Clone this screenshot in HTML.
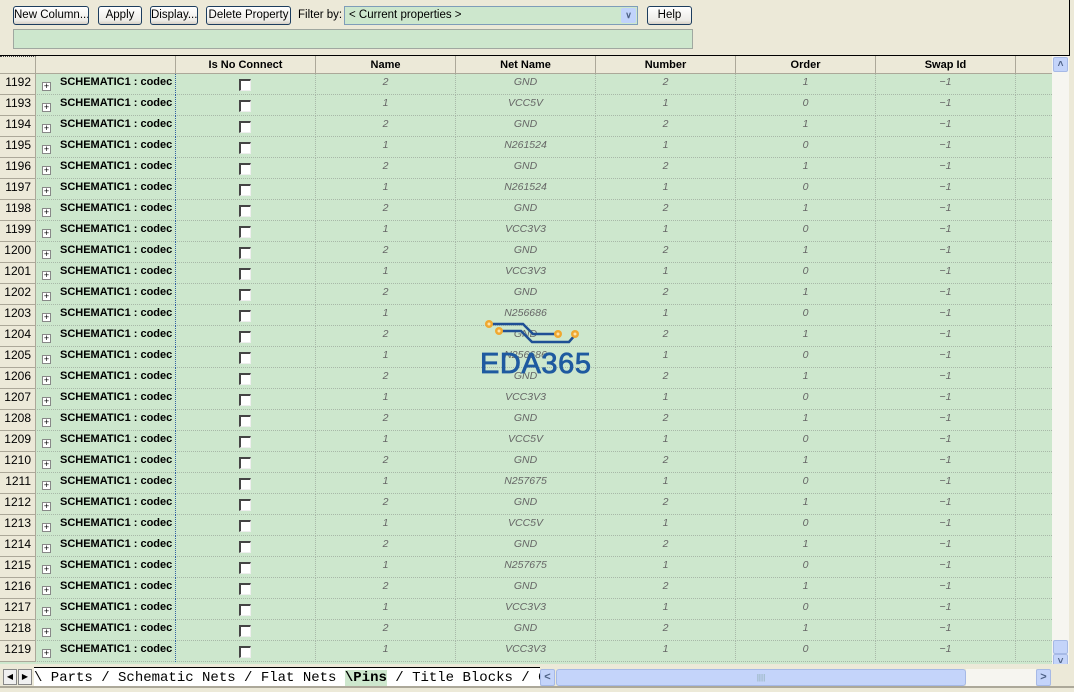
<!DOCTYPE html>
<html><head><meta charset="utf-8"><style>
*{margin:0;padding:0;box-sizing:border-box}
body{width:1074px;height:692px;overflow:hidden;background:#ece9d8;font-family:Tahoma,"Liberation Sans",sans-serif;font-size:11px;position:relative}
.a{position:absolute}
.btn{position:absolute;top:6px;height:19px;border:1px solid #1c3d5e;border-radius:3px;background:linear-gradient(#fff,#ecebe6 80%,#d6d0c5);font-size:11.5px;text-align:center;line-height:17px;color:#000;white-space:nowrap;overflow:hidden}
#grid{position:absolute;left:0;top:56px;width:1052px;height:608px;background:#cde7cd;overflow:hidden}
.hd{position:absolute;top:0;height:18px;background:#ece9d8;border-right:1px solid #aca899;border-bottom:1px solid #aca899;font-weight:bold;text-align:center;line-height:19px;font-family:"Liberation Sans",sans-serif;font-size:11px}
.row{position:absolute;left:0;width:1052px;height:21px;border-bottom:1px dotted #a8b8a8}
.row div{position:absolute;top:0;height:21px;line-height:17px}
.rn{left:0;width:36px;background:#ece9d8;border-right:1px solid #aca899;border-bottom:1px solid #aca899;text-align:right;padding-right:4px;font-family:"Liberation Sans",sans-serif;font-size:12px}
.ex{left:36px;width:140px;border-right:1px dotted #3060a0}
.ex i{position:absolute;left:6px;top:8px;width:9px;height:9px;border:1px solid #888;background:#fff;font-style:normal;font-size:9px;line-height:7px;text-align:center;color:#000}
.ex b{position:absolute;left:24px;top:0;font-family:"Liberation Sans",sans-serif;font-size:11px}
.ck{left:176px;width:140px;border-right:1px dotted #a8b8a8}
.ck span{position:absolute;left:63px;top:5px;width:12px;height:12px;border-left:2px solid #444;border-top:2px solid #444;border-right:1px solid #eee;border-bottom:1px solid #eee;background:#fff}
.c{width:140px;text-align:center;font-style:italic;color:#666;border-right:1px dotted #a8b8a8;font-family:"Liberation Sans",sans-serif;font-size:10.5px}
</style></head><body>
<div class="btn" style="left:13px;width:76px">New Column...</div>
<div class="btn" style="left:98px;width:44px">Apply</div>
<div class="btn" style="left:150px;width:48px">Display...</div>
<div class="btn" style="left:206px;width:85px">Delete Property</div>
<div class="a" style="left:298px;top:9px;font-size:11.5px">Filter by:</div>
<div class="a" style="left:344px;top:6px;width:294px;height:19px;background:#cde7cd;border:1px solid #7f9db9;padding-left:4px;line-height:17px;font-size:11.5px">&lt; Current properties &gt;<div class="a" style="right:1px;top:1px;width:15px;height:15px;background:#c1d3fb;border-radius:2px;color:#4d6185;font-size:9px;text-align:center;line-height:15px;font-weight:bold">&#8744;</div></div>
<div class="btn" style="left:647px;width:45px">Help</div>
<div class="a" style="left:13px;top:29px;width:680px;height:20px;background:#cde7cd;border:1px solid #a0a8a0"></div>
<div class="a" style="left:0;top:0;width:1070px;height:56px;border-right:1px solid #000;border-bottom:1px solid #000"></div>

<div id="grid">
<div class="hd" style="left:0;width:36px;border-top:1px dotted #444"></div>
<div class="hd" style="left:36px;width:140px"></div>
<div class="hd" style="left:176px;width:140px">Is No Connect</div>
<div class="hd" style="left:316px;width:140px">Name</div>
<div class="hd" style="left:456px;width:140px">Net Name</div>
<div class="hd" style="left:596px;width:140px">Number</div>
<div class="hd" style="left:736px;width:140px">Order</div>
<div class="hd" style="left:876px;width:140px">Swap Id</div>
<div class="hd" style="left:1016px;width:36px;border-right:none"></div>

<div class="row" style="top:18px"><div class="rn">1192</div><div class="ex"><i>+</i><b>SCHEMATIC1 : codec</b></div><div class="ck"><span></span></div><div class="c" style="left:316px">2</div><div class="c" style="left:456px">GND</div><div class="c" style="left:596px">2</div><div class="c" style="left:736px">1</div><div class="c" style="left:876px">−1</div></div>
<div class="row" style="top:39px"><div class="rn">1193</div><div class="ex"><i>+</i><b>SCHEMATIC1 : codec</b></div><div class="ck"><span></span></div><div class="c" style="left:316px">1</div><div class="c" style="left:456px">VCC5V</div><div class="c" style="left:596px">1</div><div class="c" style="left:736px">0</div><div class="c" style="left:876px">−1</div></div>
<div class="row" style="top:60px"><div class="rn">1194</div><div class="ex"><i>+</i><b>SCHEMATIC1 : codec</b></div><div class="ck"><span></span></div><div class="c" style="left:316px">2</div><div class="c" style="left:456px">GND</div><div class="c" style="left:596px">2</div><div class="c" style="left:736px">1</div><div class="c" style="left:876px">−1</div></div>
<div class="row" style="top:81px"><div class="rn">1195</div><div class="ex"><i>+</i><b>SCHEMATIC1 : codec</b></div><div class="ck"><span></span></div><div class="c" style="left:316px">1</div><div class="c" style="left:456px">N261524</div><div class="c" style="left:596px">1</div><div class="c" style="left:736px">0</div><div class="c" style="left:876px">−1</div></div>
<div class="row" style="top:102px"><div class="rn">1196</div><div class="ex"><i>+</i><b>SCHEMATIC1 : codec</b></div><div class="ck"><span></span></div><div class="c" style="left:316px">2</div><div class="c" style="left:456px">GND</div><div class="c" style="left:596px">2</div><div class="c" style="left:736px">1</div><div class="c" style="left:876px">−1</div></div>
<div class="row" style="top:123px"><div class="rn">1197</div><div class="ex"><i>+</i><b>SCHEMATIC1 : codec</b></div><div class="ck"><span></span></div><div class="c" style="left:316px">1</div><div class="c" style="left:456px">N261524</div><div class="c" style="left:596px">1</div><div class="c" style="left:736px">0</div><div class="c" style="left:876px">−1</div></div>
<div class="row" style="top:144px"><div class="rn">1198</div><div class="ex"><i>+</i><b>SCHEMATIC1 : codec</b></div><div class="ck"><span></span></div><div class="c" style="left:316px">2</div><div class="c" style="left:456px">GND</div><div class="c" style="left:596px">2</div><div class="c" style="left:736px">1</div><div class="c" style="left:876px">−1</div></div>
<div class="row" style="top:165px"><div class="rn">1199</div><div class="ex"><i>+</i><b>SCHEMATIC1 : codec</b></div><div class="ck"><span></span></div><div class="c" style="left:316px">1</div><div class="c" style="left:456px">VCC3V3</div><div class="c" style="left:596px">1</div><div class="c" style="left:736px">0</div><div class="c" style="left:876px">−1</div></div>
<div class="row" style="top:186px"><div class="rn">1200</div><div class="ex"><i>+</i><b>SCHEMATIC1 : codec</b></div><div class="ck"><span></span></div><div class="c" style="left:316px">2</div><div class="c" style="left:456px">GND</div><div class="c" style="left:596px">2</div><div class="c" style="left:736px">1</div><div class="c" style="left:876px">−1</div></div>
<div class="row" style="top:207px"><div class="rn">1201</div><div class="ex"><i>+</i><b>SCHEMATIC1 : codec</b></div><div class="ck"><span></span></div><div class="c" style="left:316px">1</div><div class="c" style="left:456px">VCC3V3</div><div class="c" style="left:596px">1</div><div class="c" style="left:736px">0</div><div class="c" style="left:876px">−1</div></div>
<div class="row" style="top:228px"><div class="rn">1202</div><div class="ex"><i>+</i><b>SCHEMATIC1 : codec</b></div><div class="ck"><span></span></div><div class="c" style="left:316px">2</div><div class="c" style="left:456px">GND</div><div class="c" style="left:596px">2</div><div class="c" style="left:736px">1</div><div class="c" style="left:876px">−1</div></div>
<div class="row" style="top:249px"><div class="rn">1203</div><div class="ex"><i>+</i><b>SCHEMATIC1 : codec</b></div><div class="ck"><span></span></div><div class="c" style="left:316px">1</div><div class="c" style="left:456px">N256686</div><div class="c" style="left:596px">1</div><div class="c" style="left:736px">0</div><div class="c" style="left:876px">−1</div></div>
<div class="row" style="top:270px"><div class="rn">1204</div><div class="ex"><i>+</i><b>SCHEMATIC1 : codec</b></div><div class="ck"><span></span></div><div class="c" style="left:316px">2</div><div class="c" style="left:456px">GND</div><div class="c" style="left:596px">2</div><div class="c" style="left:736px">1</div><div class="c" style="left:876px">−1</div></div>
<div class="row" style="top:291px"><div class="rn">1205</div><div class="ex"><i>+</i><b>SCHEMATIC1 : codec</b></div><div class="ck"><span></span></div><div class="c" style="left:316px">1</div><div class="c" style="left:456px">N256686</div><div class="c" style="left:596px">1</div><div class="c" style="left:736px">0</div><div class="c" style="left:876px">−1</div></div>
<div class="row" style="top:312px"><div class="rn">1206</div><div class="ex"><i>+</i><b>SCHEMATIC1 : codec</b></div><div class="ck"><span></span></div><div class="c" style="left:316px">2</div><div class="c" style="left:456px">GND</div><div class="c" style="left:596px">2</div><div class="c" style="left:736px">1</div><div class="c" style="left:876px">−1</div></div>
<div class="row" style="top:333px"><div class="rn">1207</div><div class="ex"><i>+</i><b>SCHEMATIC1 : codec</b></div><div class="ck"><span></span></div><div class="c" style="left:316px">1</div><div class="c" style="left:456px">VCC3V3</div><div class="c" style="left:596px">1</div><div class="c" style="left:736px">0</div><div class="c" style="left:876px">−1</div></div>
<div class="row" style="top:354px"><div class="rn">1208</div><div class="ex"><i>+</i><b>SCHEMATIC1 : codec</b></div><div class="ck"><span></span></div><div class="c" style="left:316px">2</div><div class="c" style="left:456px">GND</div><div class="c" style="left:596px">2</div><div class="c" style="left:736px">1</div><div class="c" style="left:876px">−1</div></div>
<div class="row" style="top:375px"><div class="rn">1209</div><div class="ex"><i>+</i><b>SCHEMATIC1 : codec</b></div><div class="ck"><span></span></div><div class="c" style="left:316px">1</div><div class="c" style="left:456px">VCC5V</div><div class="c" style="left:596px">1</div><div class="c" style="left:736px">0</div><div class="c" style="left:876px">−1</div></div>
<div class="row" style="top:396px"><div class="rn">1210</div><div class="ex"><i>+</i><b>SCHEMATIC1 : codec</b></div><div class="ck"><span></span></div><div class="c" style="left:316px">2</div><div class="c" style="left:456px">GND</div><div class="c" style="left:596px">2</div><div class="c" style="left:736px">1</div><div class="c" style="left:876px">−1</div></div>
<div class="row" style="top:417px"><div class="rn">1211</div><div class="ex"><i>+</i><b>SCHEMATIC1 : codec</b></div><div class="ck"><span></span></div><div class="c" style="left:316px">1</div><div class="c" style="left:456px">N257675</div><div class="c" style="left:596px">1</div><div class="c" style="left:736px">0</div><div class="c" style="left:876px">−1</div></div>
<div class="row" style="top:438px"><div class="rn">1212</div><div class="ex"><i>+</i><b>SCHEMATIC1 : codec</b></div><div class="ck"><span></span></div><div class="c" style="left:316px">2</div><div class="c" style="left:456px">GND</div><div class="c" style="left:596px">2</div><div class="c" style="left:736px">1</div><div class="c" style="left:876px">−1</div></div>
<div class="row" style="top:459px"><div class="rn">1213</div><div class="ex"><i>+</i><b>SCHEMATIC1 : codec</b></div><div class="ck"><span></span></div><div class="c" style="left:316px">1</div><div class="c" style="left:456px">VCC5V</div><div class="c" style="left:596px">1</div><div class="c" style="left:736px">0</div><div class="c" style="left:876px">−1</div></div>
<div class="row" style="top:480px"><div class="rn">1214</div><div class="ex"><i>+</i><b>SCHEMATIC1 : codec</b></div><div class="ck"><span></span></div><div class="c" style="left:316px">2</div><div class="c" style="left:456px">GND</div><div class="c" style="left:596px">2</div><div class="c" style="left:736px">1</div><div class="c" style="left:876px">−1</div></div>
<div class="row" style="top:501px"><div class="rn">1215</div><div class="ex"><i>+</i><b>SCHEMATIC1 : codec</b></div><div class="ck"><span></span></div><div class="c" style="left:316px">1</div><div class="c" style="left:456px">N257675</div><div class="c" style="left:596px">1</div><div class="c" style="left:736px">0</div><div class="c" style="left:876px">−1</div></div>
<div class="row" style="top:522px"><div class="rn">1216</div><div class="ex"><i>+</i><b>SCHEMATIC1 : codec</b></div><div class="ck"><span></span></div><div class="c" style="left:316px">2</div><div class="c" style="left:456px">GND</div><div class="c" style="left:596px">2</div><div class="c" style="left:736px">1</div><div class="c" style="left:876px">−1</div></div>
<div class="row" style="top:543px"><div class="rn">1217</div><div class="ex"><i>+</i><b>SCHEMATIC1 : codec</b></div><div class="ck"><span></span></div><div class="c" style="left:316px">1</div><div class="c" style="left:456px">VCC3V3</div><div class="c" style="left:596px">1</div><div class="c" style="left:736px">0</div><div class="c" style="left:876px">−1</div></div>
<div class="row" style="top:564px"><div class="rn">1218</div><div class="ex"><i>+</i><b>SCHEMATIC1 : codec</b></div><div class="ck"><span></span></div><div class="c" style="left:316px">2</div><div class="c" style="left:456px">GND</div><div class="c" style="left:596px">2</div><div class="c" style="left:736px">1</div><div class="c" style="left:876px">−1</div></div>
<div class="row" style="top:585px"><div class="rn">1219</div><div class="ex"><i>+</i><b>SCHEMATIC1 : codec</b></div><div class="ck"><span></span></div><div class="c" style="left:316px">1</div><div class="c" style="left:456px">VCC3V3</div><div class="c" style="left:596px">1</div><div class="c" style="left:736px">0</div><div class="c" style="left:876px">−1</div></div>
</div>

<svg class="a" style="left:478px;top:316px" width="116" height="62" viewBox="0 0 116 62">
<path d="M11 8 H45 L55 18 H80" stroke="#1f4f95" stroke-width="2.5" fill="none"/>
<path d="M21 15 H43 L54 26 H91 L97 19" stroke="#1f4f95" stroke-width="2.5" fill="none"/>
<circle cx="11" cy="8" r="4" fill="#f0a830"/><circle cx="21" cy="15" r="4" fill="#f0a830"/><circle cx="80" cy="18" r="4" fill="#f0a830"/><circle cx="97" cy="18" r="4" fill="#f0a830"/>
<circle cx="11" cy="8" r="1.5" fill="#fde2a8"/><circle cx="21" cy="15" r="1.5" fill="#fde2a8"/><circle cx="80" cy="18" r="1.5" fill="#fde2a8"/><circle cx="97" cy="18" r="1.5" fill="#fde2a8"/>
<text x="2" y="57" font-family="Liberation Sans,sans-serif" font-size="29" fill="#1f5aa0" stroke="#1f5aa0" stroke-width="0.8" textLength="111">EDA365</text>
</svg>

<div class="a" style="left:1052px;top:56px;width:17px;height:613px;background:#f6f5f0"></div>
<div class="a" style="left:1053px;top:57px;width:15px;height:15px;background:#c4d4fa;border:1px solid #a6b9e6;border-radius:2px;color:#4d6185;font-size:10px;text-align:center;line-height:14px;font-weight:bold">&#708;</div>
<div class="a" style="left:1053px;top:640px;width:15px;height:14px;background:#c4d4fa;border:1px solid #a6b9e6;border-radius:2px"></div>
<div class="a" style="left:1053px;top:654px;width:15px;height:15px;background:#c4d4fa;border:1px solid #a6b9e6;border-radius:2px;color:#4d6185;font-size:10px;text-align:center;line-height:14px;font-weight:bold">&#709;</div>

<div class="a" style="left:0;top:664px;width:1074px;height:28px;background:#ece9d8"></div>
<div class="a" style="left:0;top:686px;width:1074px;height:2px;background:#aca899"></div>
<div class="a" style="left:3px;top:669px;width:14px;height:16px;border:1px solid #888;background:#f0f0f0;font-size:8px;line-height:14px;text-align:center">&#9664;</div>
<div class="a" style="left:18px;top:669px;width:14px;height:16px;border:1px solid #888;background:#f0f0f0;font-size:8px;line-height:14px;text-align:center">&#9654;</div>
<div class="a" style="left:34px;top:667px;width:506px;height:19px;background:#fff;border-top:1px solid #000;overflow:hidden;font-family:'Liberation Mono',monospace;font-size:14px;line-height:20px;white-space:pre">\ Parts / Schematic Nets / Flat Nets <b style="background:#cde7cd">\Pins</b> / Title Blocks / Glo</div>
<div class="a" style="left:540px;top:669px;width:15px;height:17px;background:#c4d4fa;border:1px solid #a6b9e6;border-radius:2px;color:#4d6185;font-weight:bold;text-align:center;line-height:15px">&lt;</div>
<div class="a" style="left:556px;top:669px;width:410px;height:17px;background:#c4d4fa;border:1px solid #a6b9e6;border-radius:3px;text-align:center;color:#8aa;font-size:8px;line-height:15px">||||</div>
<div class="a" style="left:966px;top:669px;width:70px;height:17px;background:#f6f5f0"></div>
<div class="a" style="left:1036px;top:669px;width:15px;height:17px;background:#c4d4fa;border:1px solid #a6b9e6;border-radius:2px;color:#4d6185;font-weight:bold;text-align:center;line-height:15px">&gt;</div>
</body></html>
